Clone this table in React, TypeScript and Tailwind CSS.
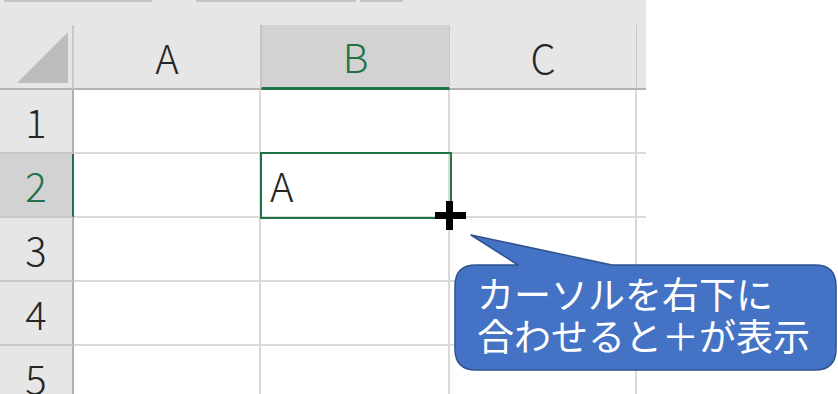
import React from 'react';

const GREEN = 'border-[#217346]';

const cols = [
    { label: 'A', width: 'w-[187px]', selected: false },
    { label: 'B', width: 'w-[189px]', selected: true },
    { label: 'C', width: 'w-[187px]', selected: false },
];

const HeaderCell: React.FC<{ label: string; width: string; selected: boolean }> = ({ label, width, selected }) => (
    <div
        className={`${width} h-full flex items-center justify-center border-r border-[#c8c8c8] ${selected
            ? 'bg-[#d2d2d2] border-l border-l-[#c0c0c0] border-b-[3px] border-b-[#217346] text-[#217346]'
            : 'border-b-2 border-b-[#b3b3b3] text-[#262626]'
            }`}
    >
        <span className="text-[40px] leading-none font-light">{label}</span>
    </div>
);

const Row: React.FC<{ n: number; selected?: boolean; value?: string }> = ({ n, selected, value }) => (
    <div className="flex h-[64px]">
        <div
            className={`w-[74px] h-full flex items-center justify-center border-b-2 border-b-[#c8c8c8] border-r-2 ${selected
                ? 'bg-[#d2d2d2] border-r-[#217346] text-[#217346]'
                : 'bg-[#e6e6e6] border-r-[#b0b0b0] text-[#262626]'
                }`}
        >
            <span className="text-[40px] leading-none font-light">{n}</span>
        </div>
        {cols.map((c, i) => (
            <div
                key={c.label}
                className={`${c.width} h-full flex items-center pl-[9px] border-r-2 border-b-2 border-[#dadada] text-[#262626]`}
            >
                {i === 1 && value ? <span className="text-[40px] leading-none font-light">{value}</span> : null}
            </div>
        ))}
        <div className="flex-1 h-full border-b-2 border-[#dadada]" />
    </div>
);

export default function App() {
    return (
        <div className="relative w-[838px] h-[394px] overflow-hidden bg-white font-['Noto_Sans_CJK_JP',sans-serif]">
            <div className="w-[646px]">
                {/* ribbon remnants along the top edge */}
                <div className="h-[25px] bg-[#e6e6e6] flex items-start">
                    <div className="ml-[4px] w-[148px] h-[2px] bg-[#c4c4c4]" />
                    <div className="ml-[44px] w-[160px] h-[2px] bg-[#c4c4c4]" />
                    <div className="ml-[4px] w-[43px] h-[2px] bg-[#c4c4c4]" />
                </div>

                {/* column headers */}
                <div className="flex h-[65px] bg-[#e6e6e6]">
                    <div className="w-[74px] h-full border-r-2 border-r-[#c8c8c8] border-b-2 border-b-[#b3b3b3] flex items-end justify-end pr-[4px] pb-[5px]">
                        <svg width="51" height="51" viewBox="0 0 51 51">
                            <polygon points="0,51 51,0 51,51" fill="#bdbdbd" />
                        </svg>
                    </div>
                    {cols.map(c => (
                        <HeaderCell key={c.label} {...c} />
                    ))}
                    <div className="flex-1 h-full border-b-2 border-b-[#b3b3b3]" />
                </div>

                <Row n={1} />
                <Row n={2} selected value="A" />
                <Row n={3} />
                <Row n={4} />
                <Row n={5} />
            </div>

            {/* active cell B2 */}
            <div className={`absolute left-[260px] top-[152px] w-[192px] h-[67px] border-2 ${GREEN}`} />

            {/* fill-handle cursor */}
            <div className="absolute left-[435px] top-[212px] w-[31px] h-[7px] bg-black" />
            <div className="absolute left-[446px] top-[201px] w-[7px] h-[29px] bg-black" />

            {/* speech callout */}
            <svg className="absolute inset-0 pointer-events-none" width="838" height="394" viewBox="0 0 838 394">
                <path
                    d="M 476 265 L 518 265 L 471 235 L 612 265 L 815 265 Q 836 265 836 286 L 836 349 Q 836 370 815 370 L 476 370 Q 455 370 455 349 L 455 286 Q 455 265 476 265 Z"
                    fill="#4472c4"
                    stroke="#2f528f"
                    strokeWidth="1.5"
                    strokeLinejoin="round"
                />
            </svg>
            <div className="absolute left-[477px] top-[272px] text-white text-[37px] leading-[42px] whitespace-nowrap">
                <div>カーソルを右下に</div>
                <div>合わせると＋が表示</div>
            </div>
        </div>
    );
}
